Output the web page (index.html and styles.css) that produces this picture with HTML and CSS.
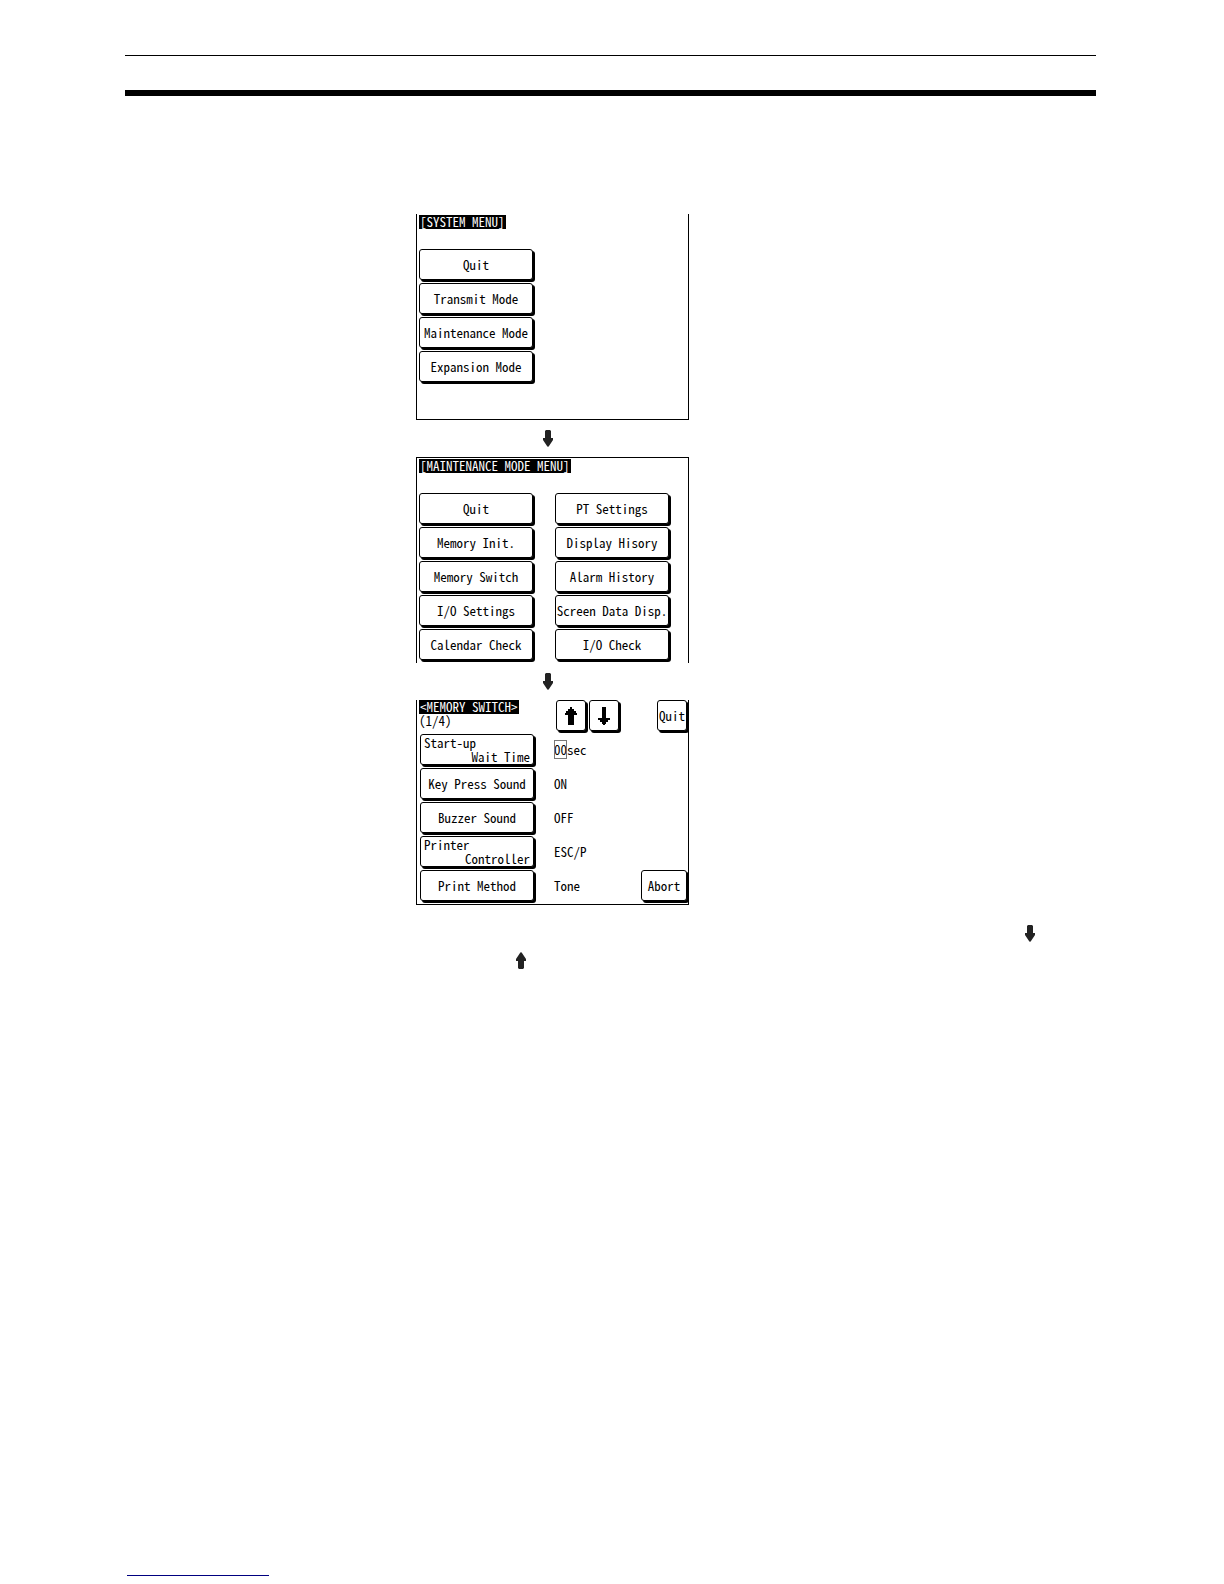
FILE: index.html
```html
<!DOCTYPE html>
<html lang="en">
<head>
    <meta charset="UTF-8">
    <title>Memory Switch</title>
    <link rel="stylesheet" href="styles.css">
</head>
<body>
    <svg class="defs" aria-hidden="true">
        <symbol id="arrow-down" viewBox="0 0 10 17">
            <path d="M3 0h4l1 1v7h2v2l-4 6-1 1-1-1-4-6V8h2V1z"/>
        </symbol>
        <symbol id="arrow-up" viewBox="0 0 10 17">
            <path d="M3 17h4l1-1V9h2V7L6 1 5 0 4 1 0 7v2h2v7z"/>
        </symbol>
    </svg>

    <header class="page-header"></header>

    <main class="figures">
        <!-- System menu -->
        <section class="screen">
            <h2 class="title">[SYSTEM MENU]</h2>
            <div class="menu">
                <button class="key">Quit</button>
                <button class="key">Transmit Mode</button>
                <button class="key">Maintenance Mode</button>
                <button class="key">Expansion Mode</button>
            </div>
        </section>

        <svg class="arrow step"><use href="#arrow-down"/></svg>

        <!-- Maintenance menu -->
        <section class="screen open-bottom">
            <h2 class="title">[MAINTENANCE MODE MENU]</h2>
            <div class="menu two-columns">
                <button class="key">Quit</button>
                <button class="key">PT Settings</button>
                <button class="key">Memory Init.</button>
                <button class="key">Display Hisory</button>
                <button class="key">Memory Switch</button>
                <button class="key">Alarm History</button>
                <button class="key">I/O Settings</button>
                <button class="key">Screen Data Disp.</button>
                <button class="key">Calendar Check</button>
                <button class="key">I/O Check</button>
            </div>
        </section>

        <svg class="arrow step"><use href="#arrow-down"/></svg>

        <!-- Memory switch, page 1 -->
        <section class="screen closed">
            <div class="bar">
                <div class="heading">
                    <h2 class="title">&lt;MEMORY SWITCH&gt;</h2>
                    <div>(1/4)</div>
                </div>
                <button class="key small" aria-label="Previous page">
                    <svg class="glyph" viewBox="0 0 12 18"><path d="M5 0h2v2h2v2h2v2h1v2H9v10H3V8H0V6h1V4h2V2h2z"/></svg>
                </button>
                <button class="key small" aria-label="Next page">
                    <svg class="glyph" viewBox="0 0 12 18"><path d="M4 0h4v11h4v2h-2v2H8v2H7v1H5v-1H4v-2H2v-2H0v-2h4z"/></svg>
                </button>
                <button class="key small right">Quit</button>
            </div>
            <div class="settings">
                <div class="row">
                    <button class="key two-line"><span>Start-up</span><span>Wait Time</span></button>
                    <div><span class="digits">00</span>sec</div>
                </div>
                <div class="row">
                    <button class="key">Key Press Sound</button>
                    <div>ON</div>
                </div>
                <div class="row">
                    <button class="key">Buzzer Sound</button>
                    <div>OFF</div>
                </div>
                <div class="row">
                    <button class="key two-line"><span>Printer</span><span>Controller</span></button>
                    <div>ESC/P</div>
                </div>
                <div class="row">
                    <button class="key">Print Method</button>
                    <div>Tone</div>
                    <button class="key medium right">Abort</button>
                </div>
            </div>
        </section>
    </main>

    <div class="notes">
        <svg class="arrow next"><use href="#arrow-down"/></svg>
        <svg class="arrow prev"><use href="#arrow-up"/></svg>
    </div>

    <footer class="page-footer"></footer>
</body>
</html>
```
FILE: styles.css
```css
* {
    box-sizing: border-box;
}
body {
    display: flex;
    flex-direction: column;
    min-height: 100vh;
    margin: 0;
    padding: 55px 128px 8px 125px;
    background: #fff;
    color: #000;
    font: 13px/14px "Noto Sans Mono CJK JP", "Liberation Mono", monospace;
}
.defs {
    position: absolute;
    width: 0;
    height: 0;
}
.page-header {
    height: 41px;
    border-top: 1px solid #000;
    border-bottom: 6px solid #000;
}
.figures {
    display: flex;
    flex-direction: column;
    align-items: flex-start;
    gap: 10px;
    margin: 118px 0 0 291px;
}

/* touch panel screens */
.screen {
    width: 273px;
    min-height: 206px;
    padding: 1px 0 0 2px;
    border: 1px solid #000;
    border-top: none;
}
.open-bottom {
    border-top: 1px solid #000;
    border-bottom: none;
}
.closed {
    min-height: 205px;
    padding-top: 0;
}
.title {
    width: fit-content;
    margin: 0;
    padding: 0 1px;
    background: #000;
    color: #fff;
    font-size: 13px;
    font-weight: normal;
}
.menu {
    display: grid;
    column-gap: 22px;
    row-gap: 3px;
    margin-top: 20px;
}
.two-columns {
    grid-template-columns: 114px 114px;
}

/* touch keys */
.key {
    width: 114px;
    height: 31px;
    padding: 0;
    border: 1px solid #000;
    border-radius: 3px;
    box-shadow: 2px 2px 0 #000;
    background: #fff;
    color: #000;
    font: inherit;
    white-space: nowrap;
    cursor: pointer;
}
.key:active {
    background: #000;
    color: #fff;
}
.small {
    width: 30px;
}
.medium {
    width: 46px;
}
.right {
    margin-left: auto;
}
.two-line {
    display: flex;
    flex-direction: column;
    align-items: flex-start;
    justify-content: center;
    padding: 0 3px;
}
.two-line span:last-child {
    align-self: flex-end;
}
.glyph {
    display: block;
    width: 12px;
    height: 18px;
    margin: 0 auto;
}
.bar {
    display: flex;
    gap: 3px;
    padding-right: 1px;
}
.heading {
    width: 134px;
}
.settings {
    display: grid;
    gap: 3px;
    margin-top: 3px;
    padding: 0 1px;
}
.row {
    display: flex;
    align-items: center;
}
.row div {
    margin-left: 20px;
}
.digits {
    outline: 1px solid #777;
    outline-offset: -1px;
    font-variant-numeric: slashed-zero;
}

/* arrows between and below the screens */
.arrow {
    display: block;
    width: 10px;
    height: 17px;
    fill: #222;
}
.step {
    margin-left: 127px;
}
.notes {
    display: grid;
    gap: 10px;
    margin-top: 20px;
}
.next {
    justify-self: end;
    margin-right: 61px;
}
.prev {
    margin-left: 391px;
}
.page-footer {
    width: 142px;
    margin: auto 0 0 2px;
    border-bottom: 1px solid #000080;
}
```
